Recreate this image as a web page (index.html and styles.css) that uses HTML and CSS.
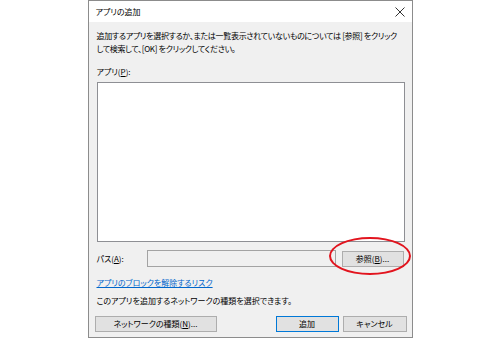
FILE: index.html
```html
<!DOCTYPE html>
<html lang="ja">
<head>
    <meta charset="UTF-8">
    <title>アプリの追加</title>
    <link rel="stylesheet" href="styles.css">
</head>
<body>
    <div class="dialog">
        <div class="titlebar">
            <span class="title">アプリの追加</span>
            <svg class="close" width="10" height="10" viewBox="0 0 10 10">
                <path d="M0.5 0.5 L9.5 9.5 M9.5 0.5 L0.5 9.5" stroke="#333" stroke-width="1" fill="none"/>
            </svg>
        </div>
        <div class="content">
            <p class="intro">追加するアプリを選択するか、または一覧表示されていないものについては [参照] をクリック<br>して検索して、[OK] をクリックしてください。</p>
            <p class="label">アプリ(<u>P</u>):</p>
            <div class="listbox"></div>
            <div class="path-row">
                <span class="path-label">パス(<u>A</u>):</span>
                <div class="path-input"></div>
                <button class="btn browse">参照(<u>B</u>)...</button>
            </div>
            <a class="link" href="#">アプリのブロックを解除するリスク</a>
            <p class="note">このアプリを追加するネットワークの種類を選択できます。</p>
        </div>
        <div class="buttons">
            <button class="btn network">ネットワークの種類(<u>N</u>)...</button>
            <span class="spacer"></span>
            <button class="btn default">追加</button>
            <button class="btn cancel">キャンセル</button>
        </div>
        <div class="mark"></div>
    </div>
</body>
</html>
```

FILE: styles.css
```css
body {
    margin: 0;
    background: #ffffff;
    font-family: "Noto Sans CJK JP", "Noto Sans", sans-serif;
    font-size: 8px;
    font-feature-settings: "palt" 1;
    color: #000000;
}

.dialog {
    position: relative;
    width: 323px;
    height: 336px;
    margin: 0 auto;
    border: 1px solid #8c8c8c;
    background: #f0f0f0;
}

.titlebar {
    height: 21px;
    background: #ffffff;
    display: flex;
    align-items: center;
    justify-content: space-between;
    padding: 0 7px 0 7px;
}

.content {
    padding: 8px 8px 0 8px;
}

p {
    margin: 0;
}

.intro {
    line-height: 12.5px;
    white-space: nowrap;
    letter-spacing: -0.3px;
}

.label {
    margin-top: 11px;
    line-height: 12px;
}

.listbox {
    margin-top: 4px;
    width: 306px;
    height: 158px;
    background: #ffffff;
    border: 1px solid #8e8f94;
}

.path-row {
    display: flex;
    align-items: center;
    margin-top: 8px;
    height: 17px;
}

.path-label {
    width: 50px;
}

.path-input {
    width: 187px;
    height: 15px;
    border: 1px solid #a3a3a3;
    background: #f0f0f0;
}

.btn {
    font-family: inherit;
    font-size: 8px;
    font-feature-settings: "palt" 1;
    color: #000000;
    background: #e1e1e1;
    border: 1px solid #adadad;
    padding: 0;
    height: 16px;
    line-height: 14px;
}

.browse {
    margin-left: 6px;
    width: 62px;
}

.link {
    display: block;
    margin-top: 10px;
    line-height: 12px;
    color: #0066cc;
    text-decoration: underline;
    width: max-content;
}

.note {
    margin-top: 6px;
    line-height: 12px;
}

.buttons {
    display: flex;
    margin-top: 9px;
    padding: 0 5px 0 6px;
}

.network {
    width: 122px;
}

.spacer {
    flex: 1;
}

.default {
    width: 63px;
    border-color: #0078d7;
}

.cancel {
    width: 64px;
    margin-left: 4px;
}

.mark {
    position: absolute;
    left: 240px;
    top: 236px;
    width: 78px;
    height: 34px;
    border: 2.5px solid #e2141e;
    border-radius: 50%;
}
```
